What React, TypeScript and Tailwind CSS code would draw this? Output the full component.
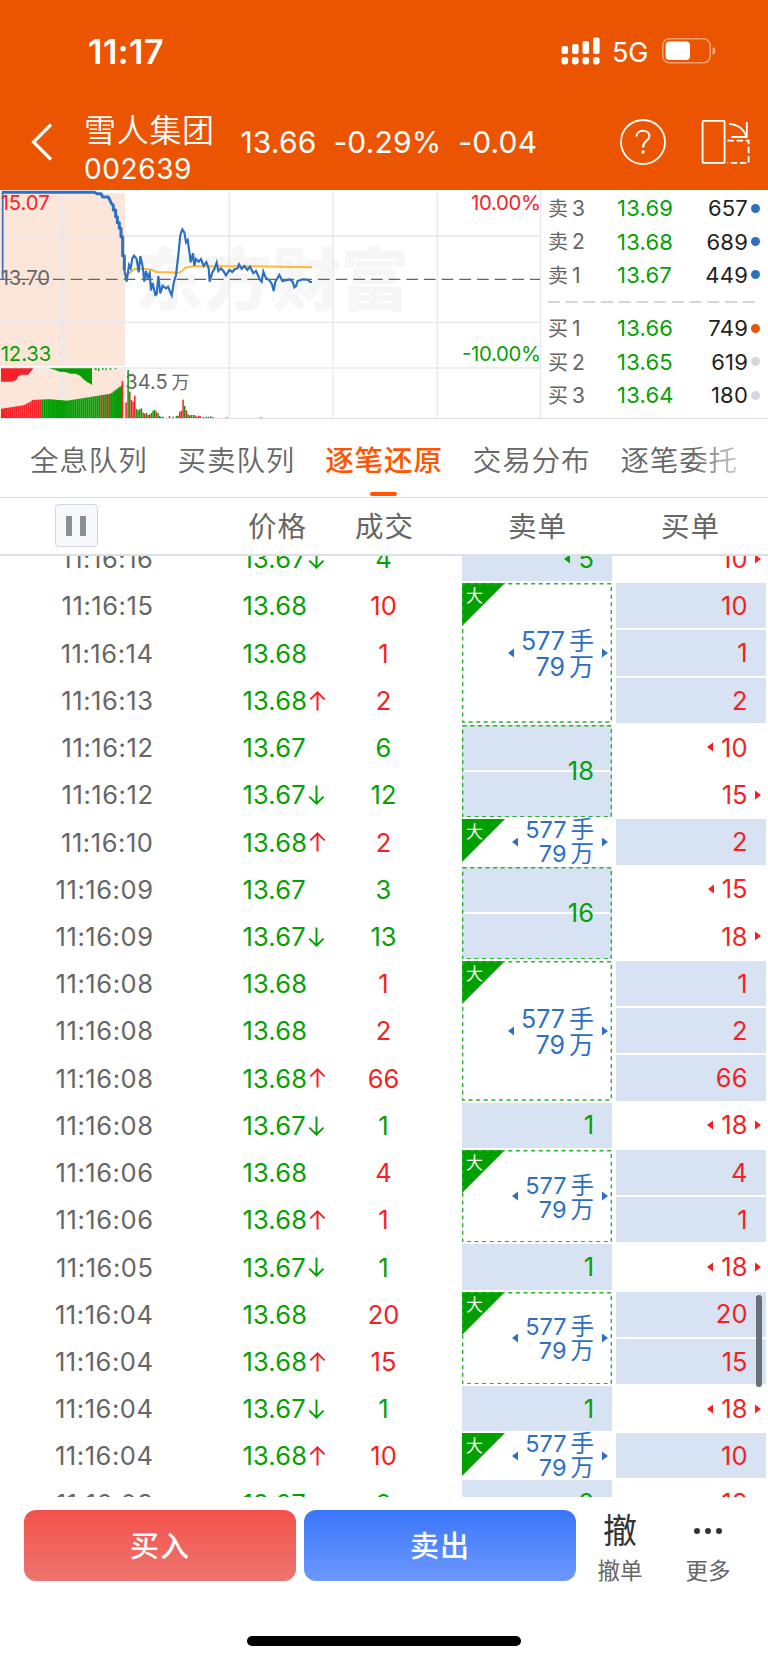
import { Fragment } from "react";

const FONT = "font-['Inter','Noto_Sans_CJK_SC',sans-serif]";

interface Tick { time: string; price: string; dir?: "up" | "down"; vol: number; side: "buy" | "sell" }
interface SellGroup { rows: number; big?: boolean; text?: string; left?: boolean }
interface BuyCell { n: number; fill?: boolean; left?: boolean; right?: boolean }

const TICKS: Tick[] = [
  { time: "11:16:16", price: "13.67", dir: "down", vol: 4, side: "sell" },
  { time: "11:16:15", price: "13.68", vol: 10, side: "buy" },
  { time: "11:16:14", price: "13.68", vol: 1, side: "buy" },
  { time: "11:16:13", price: "13.68", dir: "up", vol: 2, side: "buy" },
  { time: "11:16:12", price: "13.67", vol: 6, side: "sell" },
  { time: "11:16:12", price: "13.67", dir: "down", vol: 12, side: "sell" },
  { time: "11:16:10", price: "13.68", dir: "up", vol: 2, side: "buy" },
  { time: "11:16:09", price: "13.67", vol: 3, side: "sell" },
  { time: "11:16:09", price: "13.67", dir: "down", vol: 13, side: "sell" },
  { time: "11:16:08", price: "13.68", vol: 1, side: "buy" },
  { time: "11:16:08", price: "13.68", vol: 2, side: "buy" },
  { time: "11:16:08", price: "13.68", dir: "up", vol: 66, side: "buy" },
  { time: "11:16:08", price: "13.67", dir: "down", vol: 1, side: "sell" },
  { time: "11:16:06", price: "13.68", vol: 4, side: "buy" },
  { time: "11:16:06", price: "13.68", dir: "up", vol: 1, side: "buy" },
  { time: "11:16:05", price: "13.67", dir: "down", vol: 1, side: "sell" },
  { time: "11:16:04", price: "13.68", vol: 20, side: "buy" },
  { time: "11:16:04", price: "13.68", dir: "up", vol: 15, side: "buy" },
  { time: "11:16:04", price: "13.67", dir: "down", vol: 1, side: "sell" },
  { time: "11:16:04", price: "13.68", dir: "up", vol: 10, side: "buy" },
  { time: "11:16:03", price: "13.67", vol: 2, side: "sell" },
];

const SELLS: SellGroup[] = [
  { rows: 1, text: "5", left: true },
  { rows: 3, big: true },
  { rows: 2, text: "18" },
  { rows: 1, big: true },
  { rows: 2, text: "16" },
  { rows: 3, big: true },
  { rows: 1, text: "1" },
  { rows: 2, big: true },
  { rows: 1, text: "1" },
  { rows: 2, big: true },
  { rows: 1, text: "1" },
  { rows: 1, big: true },
  { rows: 1, text: "2" },
];

const BUYS: BuyCell[] = [
  { n: 10, right: true },
  { n: 10, fill: true },
  { n: 1, fill: true },
  { n: 2, fill: true },
  { n: 10, left: true },
  { n: 15, right: true },
  { n: 2, fill: true },
  { n: 15, left: true },
  { n: 18, right: true },
  { n: 1, fill: true },
  { n: 2, fill: true },
  { n: 66, fill: true },
  { n: 18, left: true, right: true },
  { n: 4, fill: true },
  { n: 1, fill: true },
  { n: 18, left: true, right: true },
  { n: 20, fill: true },
  { n: 15, fill: true },
  { n: 18, left: true, right: true },
  { n: 10, fill: true },
  { n: 18, left: true },
];

const BOOK = [
  { label: "卖3", price: "13.69", qty: 657, dot: "bg-[#2d70c3]" },
  { label: "卖2", price: "13.68", qty: 689, dot: "bg-[#2d70c3]" },
  { label: "卖1", price: "13.67", qty: 449, dot: "bg-[#2d70c3]" },
  { label: "买1", price: "13.66", qty: 749, dot: "bg-[#eb5502]" },
  { label: "买2", price: "13.65", qty: 619, dot: "bg-[#d4d7de]" },
  { label: "买3", price: "13.64", qty: 180, dot: "bg-[#d4d7de]" },
];

const ROW_H = 47.22;

function Caret({ dir, className }: { dir: "left" | "right"; className: string }) {
  return (
    <svg viewBox="0 0 6 10" className={`w-[6px] h-[10px] shrink-0 ${className}`} fill="currentColor">
      <path d={dir === "left" ? "M6 0.5V9.5L0 5Z" : "M0 0.5V9.5L6 5Z"} />
    </svg>
  );
}

function PriceArrow({ dir }: { dir: "up" | "down" }) {
  return (
    <svg viewBox="0 0 16 20" className={`w-4 h-5 ml-[2px] ${dir === "up" ? "text-[#f51f24]" : "text-[#0a9f0a]"}`} fill="none" stroke="currentColor" strokeWidth="2">
      {dir === "up" ? <path d="M8.5 19.5V1.6M1.3 8.4L8.5 1.4L15.6 8.4" /> : <path d="M8.5 0.5V18.4M1.3 11.6L8.5 18.6L15.6 11.6" />}
    </svg>
  );
}

function Header() {
  return (
    <header className="h-[190px] bg-[#eb5502] text-white">
      <div className="h-[102px] flex items-center pl-[88px] pr-[52px]">
        <span className="text-[34px] font-semibold tracking-[0.5px] leading-none pt-[2px]">11:17</span>
        <svg className="ml-auto w-[39px] h-[28px]" viewBox="0 0 39 28" fill="currentColor">
          <rect x="0.5" y="9" width="6.6" height="8" rx="2" />
          <rect x="11" y="7" width="6.6" height="10" rx="2" />
          <rect x="21.5" y="4" width="6.6" height="13" rx="2" />
          <rect x="32" y="0.5" width="6.6" height="16.5" rx="2" />
          {[0.5, 11, 21.5, 32].map((x) => <rect key={x} x={x} y="20" width="6.6" height="7.4" rx="2.4" />)}
        </svg>
        <span className="ml-[12px] w-[37px] text-[27px] leading-none tracking-[-0.2px] mt-[2px]">5G</span>
        <svg className="ml-[13px] w-[54px] h-[26px]" viewBox="0 0 54 26" fill="none">
          <rect x="0.8" y="0.8" width="47.4" height="24" rx="6.5" stroke="#fff" strokeOpacity="0.45" strokeWidth="1.5" />
          <rect x="3.6" y="3.6" width="24.4" height="18.4" rx="4" fill="#fff" />
          <path d="M50.5 9V17C52.2 16.4 53.5 14.8 53.5 13S52.2 9.6 50.5 9Z" fill="#fff" fillOpacity="0.5" />
        </svg>
      </div>
      <div className="h-[88px] flex items-center pl-[31px] pr-[18px]">
        <svg className="w-[22px] h-[38px] mt-[-8px]" viewBox="0 0 22 38" fill="none" stroke="currentColor" strokeWidth="3.2"><path d="M20 1.5L2.5 19L20 36.5" /></svg>
        <div className="ml-[31px] w-[156.5px] mt-[7px]">
          <div className="text-[32px] leading-[38px] tracking-[0.7px] font-[350]">雪人集团</div>
          <div className="text-[28px] leading-[38px] tracking-[0.6px]">002639</div>
        </div>
        <div className="flex w-[300px] gap-[17px] text-[30px] leading-none tracking-[0.15px] mt-[-8px] whitespace-nowrap">
          <span>13.66</span>
          <span>-0.29%</span>
          <span>-0.04</span>
        </div>
        <svg className="ml-auto w-[46px] h-[46px] mt-[-8px]" viewBox="0 0 46 46" fill="none" stroke="currentColor" strokeWidth="1.8">
          <circle cx="23" cy="23" r="22" />
          <path d="M16.6 17.6C16.6 13.8 19.4 11.8 23 11.8S29.4 14 29.4 17.2C29.4 21.6 23 21.8 23 28.6" strokeWidth="2.1" />
          <circle cx="23" cy="33" r="1.7" fill="currentColor" stroke="none" />
        </svg>
        <svg className="ml-[35px] w-[49px] h-[46px] mt-[-8px]" viewBox="0 0 49 46" fill="none" stroke="currentColor" strokeWidth="1.8">
          <rect x="1.6" y="1.9" width="22" height="42" rx="1" />
          <path d="M28 4.8C36 5.2 42.5 9.5 45.2 17.2M45.8 3V18H30.2" />
          <path d="M26.5 21.6H47.6V43.8H26.5" strokeDasharray="6.5 2.6" />
        </svg>
      </div>
    </header>
  );
}

const OPENING = "M285 22L290 26H303L308 36H325L330 46L335 57L340 60V75H347V95H352V113H358V130H363V155H368V212H373V255";
const PRICE_LINE = "M373 255L380 290L387 240L392 250L397 220L402 212L410 222L416 262L421 213L428 245L433 290L438 258L443 278L449 265L453 316L458 294L466 330L470 328L475 273L481 325L488 302L498 310L504 305L515 331L522 290L528 270L535 210L541 150L547 133L553 142L558 172L563 165L568 200L572 232L579 205L583 242L588 222L596 230L603 222L611 243L619 231L626 250L629 290L637 262L644 250L650 233L655 258L663 250L670 258L678 271L688 255L697 261L705 252L713 250L717 238L725 252L733 243L742 255L750 245L760 264L768 258L780 284L785 290L790 260L797 278L810 288L816 298L821 318L826 290L838 270L847 288L870 283L878 290L883 307L888 303L893 288L910 283L925 285L930 291H936";

// opening-auction volume, one bar per sample across the shaded area
const AUCTION = Array.from({ length: 60 }, (_, i) => {
  const x = 4 + i * 6.1;
  const top = x < 70 ? 671 - (x - 4) * 0.16 : x < 95 ? 660 - (x - 70) * 0.5 : x < 150 ? 645 - (x - 95) * 0.05 : x < 200 ? 643 + (x - 150) * 0.08 : x < 330 ? 647 - (x - 200) * 0.16 : 626 - (x - 330) * 0.75;
  return { x, top, red: x < 120 || Math.abs(x - 301) < 3.1 || Math.abs(x - 322) < 3.1 };
});

const VOL: [number, number, boolean][] = [
  [367, 588, true], [378, 652, true], [384, 555, false], [389, 620, true], [394, 645, true], [399, 650, true], [404, 632, true], [409, 672, false], [414, 676, false],
  [419, 672, true], [424, 670, false], [429, 683, false], [434, 686, true], [439, 684, false], [444, 690, true], [449, 688, false], [454, 684, true], [459, 677, false],
  [464, 675, false], [469, 680, true], [474, 685, false], [479, 693, false], [484, 696, true], [489, 695, false], [508, 693, true], [519, 695, false], [529, 693, false], [534, 692, true],
  [539, 680, true], [544, 677, true], [549, 644, true], [554, 663, false], [559, 676, true], [564, 688, false], [569, 691, true], [574, 690, false], [580, 690, false],
  [585, 691, true], [590, 695, false], [595, 692, true], [600, 693, true], [610, 696, false], [618, 695, false], [625, 695, true], [632, 694, false], [638, 696, true], [680, 697, false], [782, 697, false],
];

function Chart() {
  return (
    <svg className="w-[541px] h-[229px] shrink-0 border-r border-[#e3e6ee]" viewBox="0 15 1620 687" preserveAspectRatio="none">
      <path d="M0 24H375V543H0ZM0 553H375V700H0Z" fill="#fce6da" />
      <text x="404" y="360" fontSize="206" fontWeight="900" fill="#f6f6f7" style={{ fontFamily: "Noto Sans CJK SC, sans-serif" }}>东方财富</text>
      <g stroke="#e5e8ef" strokeWidth="4">
        <path d="M187 24V543M688 24V543M999 24V543M1312 24V543M187 555V700M688 555V700M999 555V700M1312 555V700" />
        <path d="M0 153H1620M0 412H1620M0 549H1620" />
      </g>
      <path d="M0 283H1620" stroke="#666" strokeWidth="3.5" strokeDasharray="35 18" />
      {AUCTION.map((b) => <rect key={b.x} x={b.x - 1} y={b.top} width="6.3" height={699 - b.top} fill={b.red ? "#f5222a" : "#06a006"} />)}
      <path d="M3 550H100L92 560L84 569H66L54 574L50 584L35 590H3Z" fill="#f5222a" />
      <path d="M146 550H276V600L268 595L260 590L250 583L240 572L228 566H212L196 561L178 560L166 555Z" fill="#06a006" />
      <path d="M284 550H290V555H284ZM294 550H298V558H294ZM306 550H311V554H306ZM316 550H320V556H316ZM329 550H334V554H329ZM344 550H349V553H344Z" fill="#06a006" />
      {VOL.map(([x, y, up]) => <rect key={x} x={x - 2} y={y} width="4.6" height={699 - y} fill={up ? "#f5222a" : "#06a006"} />)}
      <path d="M376 268L390 264L402 252L440 252L455 255L470 261L500 262L537 263L546 258L556 248L580 244H760L936 247" fill="none" stroke="#fcb93a" strokeWidth="6" />
      <path d={PRICE_LINE} fill="none" stroke="#2d70c3" strokeWidth="6.5" />
      <path d="M8 283V22" stroke="#2d70c3" strokeWidth="5" />
      <path d="M5 22H287" stroke="#2d70c3" strokeWidth="9" />
      <path d={OPENING} fill="none" stroke="#2d70c3" strokeWidth="9" strokeLinejoin="round" />
      <g fontSize="61" className="font-['Inter']">
        <text x="2" y="75" fill="#f5222a" textLength="147">15.07</text>
        <text x="2" y="301" fill="#666" textLength="148">13.70</text>
        <text x="2" y="527" fill="#06a006" textLength="152">12.33</text>
        <text x="1413" y="75" fill="#f5222a" textLength="210">10.00%</text>
        <text x="1386" y="527" fill="#06a006" textLength="237">-10.00%</text>
      </g>
      <text x="376" y="611" fontSize="60" fill="#666" style={{ fontFamily: "Inter, Noto Sans CJK SC, sans-serif" }}>
        34.5<tspan dx="12" fontSize="54">万</tspan>
      </text>
    </svg>
  );
}

function OrderBook() {
  return (
    <div className="flex-1 pt-[2px]">
      {BOOK.map((b, i) => (
        <Fragment key={b.label}>
          {i === 3 && (
            <svg className="block w-[208px] h-[20px] ml-[7px]" viewBox="0 0 208 20"><path d="M0 10H208" stroke="#d3d6de" strokeWidth="2" strokeDasharray="12 5.7" /></svg>
          )}
          <div className="h-[33.4px] flex items-center text-[22px] pl-[7px] pr-[8px]">
            <span className="w-[69px] text-[#666] text-[21px]"><span className="text-[20px] mr-[4px]">{b.label[0]}</span>{b.label[1]}</span>
            <span className="text-[#06a006] tracking-[0.2px]">{b.price}</span>
            <span className="ml-auto text-[#222] tracking-[0.2px]">{b.qty}</span>
            <span className={`ml-[3px] mt-[-1px] w-[9px] h-[9px] rounded-full ${b.dot}`} />
          </div>
        </Fragment>
      ))}
    </div>
  );
}

function Tabs() {
  const tabs = ["全息队列", "买卖队列", "逐笔还原", "交易分布", "逐笔委托"];
  return (
    <nav className="relative h-[80px] border-t border-b border-[#dcdfe6] flex pl-[30px] gap-[30px] overflow-hidden">
      {tabs.map((t) => {
        const on = t === "逐笔还原";
        return (
          <div key={t} className={`relative shrink-0 w-[117.6px] pt-[22px] text-[28.5px] leading-[40px] tracking-[0.9px] whitespace-nowrap ${on ? "text-[#ff5500] font-medium" : "text-[#666] font-[350]"}`}>
            {t}
            {on && <span className="absolute left-[45px] bottom-[1px] w-[27px] h-[4px] rounded-full bg-[#ff5500]" />}
          </div>
        );
      })}
      <div className="absolute right-0 top-0 w-[75px] h-full bg-gradient-to-l from-white from-10% to-transparent" />
    </nav>
  );
}

function ColumnHeads() {
  return (
    <div className="h-[58px] border-b-2 border-[#dcdfe6] flex items-center text-[28.5px] tracking-[0.9px] text-[#666]">
      <div className="w-[248px] pl-[55px]">
        <div className="w-[43px] h-[43px] rounded-[4px] border border-[#d3d6de] bg-[#f6f8fc] flex items-center justify-center gap-[8px] mt-[-1px] pr-[1px]">
          <span className="w-[6px] h-[20px] bg-[#8d8d95]" />
          <span className="w-[6px] h-[20px] bg-[#8d8d95]" />
        </div>
      </div>
      <span className="w-[107px] pt-[2px]">价格</span>
      <span className="w-[107px] pt-[2px]">成交</span>
      <span className="w-[151px] pt-[2px] text-center">卖单</span>
      <span className="w-[155px] pt-[2px] text-center">买单</span>
    </div>
  );
}

function BigOrder({ rows }: { rows: number }) {
  return (
    <>
      <svg className="absolute left-0 top-0 w-[43px] h-[43px]" viewBox="0 0 43 43"><path d="M0 0H43L0 43Z" fill="#00a000" /></svg>
      <span className="absolute left-[4px] top-[1px] text-[17px] leading-[25px] text-white">大</span>
      <div className="ml-auto flex items-center text-[#2d70c3]">
        <Caret dir="left" className="mr-[7px]" />
        <div className={`text-right ${rows === 3 ? "text-[25px] leading-[26px] pt-[2px]" : rows === 2 ? "text-[23.5px] leading-[24px] pt-[3px]" : "text-[23.5px] leading-[24px] pt-px"}`}>
          <div>577<span className="ml-[4px]">手</span></div>
          <div>79<span className="ml-[4px]">万</span></div>
        </div>
        <Caret dir="right" className="ml-[8px] mr-[4px]" />
      </div>
    </>
  );
}

function SellColumn() {
  return (
    <div className="w-[150px] ml-[-1px] mr-[4px]">
      {SELLS.map((g, i) => (
        <div key={i} className="relative py-[1px]" style={{ height: g.rows * ROW_H }}>
          {!g.big && (
            <div className="h-full flex flex-col gap-[2px]">
              {Array.from({ length: g.rows }, (_, k) => <div key={k} className="flex-1 bg-[#d7e3f3]" />)}
            </div>
          )}
          <div className="absolute inset-x-0 inset-y-[1px] flex items-center">
            {g.big ? <BigOrder rows={g.rows} /> : (
              <div className="ml-auto mr-[18px] flex items-center text-[#06a006]">
                {g.left && <Caret dir="left" className="mr-[8px]" />}
                <span>{g.text}</span>
              </div>
            )}
          </div>
          {g.rows > 1 && (
            <svg className="absolute left-0 top-[1px] w-[150px]" style={{ height: g.rows * ROW_H - 2 }}>
              <rect x="0.7" y="0.7" width="148.6" height={g.rows * ROW_H - 3.4} fill="none" stroke="#2fb02f" strokeWidth="1.4" strokeDasharray="4 3.6" />
            </svg>
          )}
        </div>
      ))}
    </div>
  );
}

function BuyColumn() {
  return (
    <div className="w-[150px] text-[#f51f24]">
      {BUYS.map((b, i) => (
        <div key={i} className="h-[47.22px] py-[1px]">
          <div className={`h-full flex items-center justify-end ${b.fill ? "bg-[#d7e3f3]" : ""}`}>
            {b.left && <Caret dir="left" className="mr-[8px]" />}
            <span>{b.n}</span>
            <span className="w-[18.5px] pl-[7.5px]">{b.right && <Caret dir="right" className="" />}</span>
          </div>
        </div>
      ))}
    </div>
  );
}

function TickList() {
  return (
    <section className="relative h-[941px] overflow-hidden">
      <div className="flex mt-[-21px] text-[25.5px] leading-none">
        <div className="w-[463px] pt-[0.4px]">
          {TICKS.map((t, i) => (
            <div key={i} className="h-[47.22px] flex items-center">
              <span className="w-[153.5px] text-right text-[#666] tracking-[0.55px]">{t.time}</span>
              <span className="w-[189.5px] pl-[89px] flex items-center text-[#06a006] tracking-[0.15px]">
                {t.price}
                {t.dir && <PriceArrow dir={t.dir} />}
              </span>
              <span className={`w-[81px] text-center ${t.side === "buy" ? "text-[#f51f24]" : "text-[#06a006]"}`}>{t.vol}</span>
            </div>
          ))}
        </div>
        <SellColumn />
        <BuyColumn />
      </div>
      <div className="absolute right-[6px] top-[739px] w-[6px] h-[92px] rounded-full bg-[#696e77]" />
    </section>
  );
}

function Footer() {
  return (
    <footer className="h-[166px] relative bg-white">
      <div className="flex pt-[13px] pl-[24px]">
        <button className="w-[272px] h-[71px] rounded-[12px] bg-gradient-to-b from-[#f4504a] to-[#ed746f] text-white text-[29px] tracking-[1px] font-medium pt-[2px]">买入</button>
        <button className="ml-[8px] w-[272px] h-[71px] rounded-[12px] bg-gradient-to-b from-[#3a75f9] to-[#6c98fe] text-white text-[29px] tracking-[1px] font-medium pt-[2px]">卖出</button>
        <div className="w-[88px] flex flex-col items-center">
          <span className="text-[34px] leading-[42px] text-[#333]">撤</span>
          <span className="mt-[6px] text-[22.5px] leading-[26px] text-[#666]">撤单</span>
        </div>
        <div className="w-[88px] flex flex-col items-center">
          <span className="h-[42px] flex items-center gap-[5px]">
            {[0, 1, 2].map((i) => <span key={i} className="w-[6px] h-[6px] rounded-full bg-[#333]" />)}
          </span>
          <span className="mt-[6px] text-[22.5px] leading-[26px] text-[#666]">更多</span>
        </div>
      </div>
      <div className="absolute left-[247px] bottom-[17px] w-[274px] h-[10px] rounded-full bg-black" />
    </footer>
  );
}

export default function App() {
  return (
    <div className={`w-[768px] h-[1663px] bg-white overflow-hidden ${FONT}`}>
      <Header />
      <div className="flex h-[228px]">
        <Chart />
        <OrderBook />
      </div>
      <Tabs />
      <ColumnHeads />
      <TickList />
      <Footer />
    </div>
  );
}
